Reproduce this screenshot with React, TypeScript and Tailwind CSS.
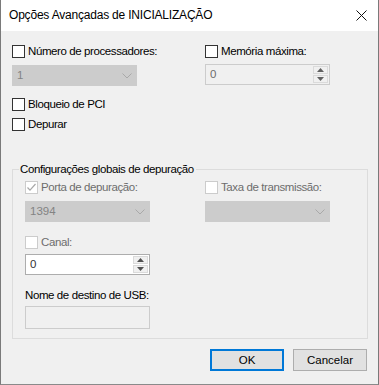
const FONT = "font-['Liberation_Sans',Arial,sans-serif]";

function CheckBox({ label, checked = false, disabled = false }: { label: string; checked?: boolean; disabled?: boolean }) {
  return (
    <div className="flex h-[13px] items-center gap-[3px]">
      <div
        className={
          "flex h-[13px] w-[13px] shrink-0 items-center justify-center border " +
          (disabled ? "border-[#cccccc] bg-white" : "border-[#333333] bg-white")
        }
      >
        {checked && (
          <svg width="11" height="11" viewBox="0 0 11 11">
            <path d="M1.5 5.5 L4 8.2 L9.5 2" fill="none" stroke="#a8a8a8" strokeWidth="1.2" />
          </svg>
        )}
      </div>
      <span className={"text-[11.5px] leading-[15px] tracking-[-0.4px] " + (disabled ? "text-[#6d6d6d]" : "text-black")}>{label}</span>
    </div>
  );
}

function Chevron() {
  return (
    <svg width="10" height="6" viewBox="0 0 10 6">
      <path d="M0.5 0.5 L5 5 L9.5 0.5" fill="none" stroke="#a9a9a9" strokeWidth="1" />
    </svg>
  );
}

function Combo({ value }: { value?: string }) {
  return (
    <div className="flex h-[21px] w-[125px] items-center justify-between border border-[#cccccc] bg-[#cccccc] pl-[4px] pr-[4px]">
      <span className="text-[11.5px] leading-[15px] text-[#838383]">{value}</span>
      <Chevron />
    </div>
  );
}

function Arrow({ up, color }: { up?: boolean; color: string }) {
  return (
    <svg width="7" height="4" viewBox="0 0 7 4">
      <path d={up ? "M0 4 L3.5 0 L7 4 Z" : "M0 0 L3.5 4 L7 0 Z"} fill={color} />
    </svg>
  );
}

function Spin({ value, disabled = false }: { value: string; disabled?: boolean }) {
  return (
    <div
      className={
        "flex h-[21px] w-[125px] items-stretch border " +
        (disabled ? "border-[#cccccc] bg-[#f0f0f0]" : "border-[#adadad] bg-white")
      }
    >
      <span className={"flex flex-1 items-center pl-[4px] text-[11.5px] leading-[15px] " + (disabled ? "text-[#6d6d6d]" : "text-[#333333]")}>
        {value}
      </span>
      <div className="flex w-[16px] flex-col gap-[1px] py-[1px] pr-[1px]">
        <div className="flex flex-1 items-center justify-center border border-[#dadada] bg-[#f0f0f0]">
          <Arrow up color={disabled ? "#606060" : "#505050"} />
        </div>
        <div className="flex flex-1 items-center justify-center border border-[#dadada] bg-[#f0f0f0]">
          <Arrow color={disabled ? "#606060" : "#505050"} />
        </div>
      </div>
    </div>
  );
}

export default function App() {
  return (
    <div className={"h-[385px] w-[379px] border-x border-b border-x-[#7a7a7a] border-b-[#8a8a8a] bg-[#f0f0f0] text-black " + FONT}>
      {/* Title bar */}
      <div className="flex h-[31px] items-center justify-between bg-white pl-[8px] pr-[11px]">
        <span className="text-[12px] leading-[15px] tracking-[-0.2px]">Opções Avançadas de INICIALIZAÇÃO</span>
        <svg width="11" height="11" viewBox="0 0 11 11">
          <path d="M0.5 0.5 L10.5 10.5 M10.5 0.5 L0.5 10.5" stroke="#111" strokeWidth="1" />
        </svg>
      </div>

      <div className="pl-[11px] pr-[10px]">
        <div className="mt-[14px] flex">
          <div className="w-[193px]">
            <CheckBox label="Número de processadores:" />
            <div className="mt-[7px]">
              <Combo value="1" />
            </div>
          </div>
          <div>
            <CheckBox label="Memória máxima:" />
            <div className="mt-[6px]">
              <Spin value="0" disabled />
            </div>
          </div>
        </div>

        <div className="mt-[12px]">
          <CheckBox label="Bloqueio de PCI" />
        </div>
        <div className="mt-[7px]">
          <CheckBox label="Depurar" />
        </div>

        {/* Group box */}
        <div className="relative mt-[38px] w-[356px] border border-[#dcdcdc] pb-[9px] pl-[12px] pt-[11px]">
          <span className="absolute -top-[8px] left-[6px] bg-[#f0f0f0] pl-[1px] pr-[2px] text-[11.5px] leading-[15px] tracking-[-0.4px]">
            Configurações globais de depuração
          </span>
          <div className="flex">
            <div className="w-[180px]">
              <CheckBox label="Porta de depuração:" checked disabled />
              <div className="mt-[7px]">
                <Combo value="1394" />
              </div>
            </div>
            <div>
              <CheckBox label="Taxa de transmissão:" disabled />
              <div className="mt-[7px]">
                <Combo />
              </div>
            </div>
          </div>
          <div className="mt-[14px]">
            <CheckBox label="Canal:" disabled />
          </div>
          <div className="mt-[5px]">
            <Spin value="0" />
          </div>
          <div className="mt-[13px] text-[11.5px] leading-[15px] tracking-[-0.4px]">Nome de destino de USB:</div>
          <div className="mt-[3px] h-[23px] w-[125px] border border-[#cccccc] bg-[#f0f0f0]" />
        </div>

        <div className="mt-[10px] flex justify-end gap-[9px] pr-[1px]">
          <button className="h-[22px] w-[74px] border-2 border-[#0078d7] bg-[#e1e1e1] text-[11.5px] leading-[15px]">OK</button>
          <button className="h-[22px] w-[74px] border border-[#adadad] bg-[#e1e1e1] text-[11.5px] leading-[15px]">Cancelar</button>
        </div>
      </div>
    </div>
  );
}
